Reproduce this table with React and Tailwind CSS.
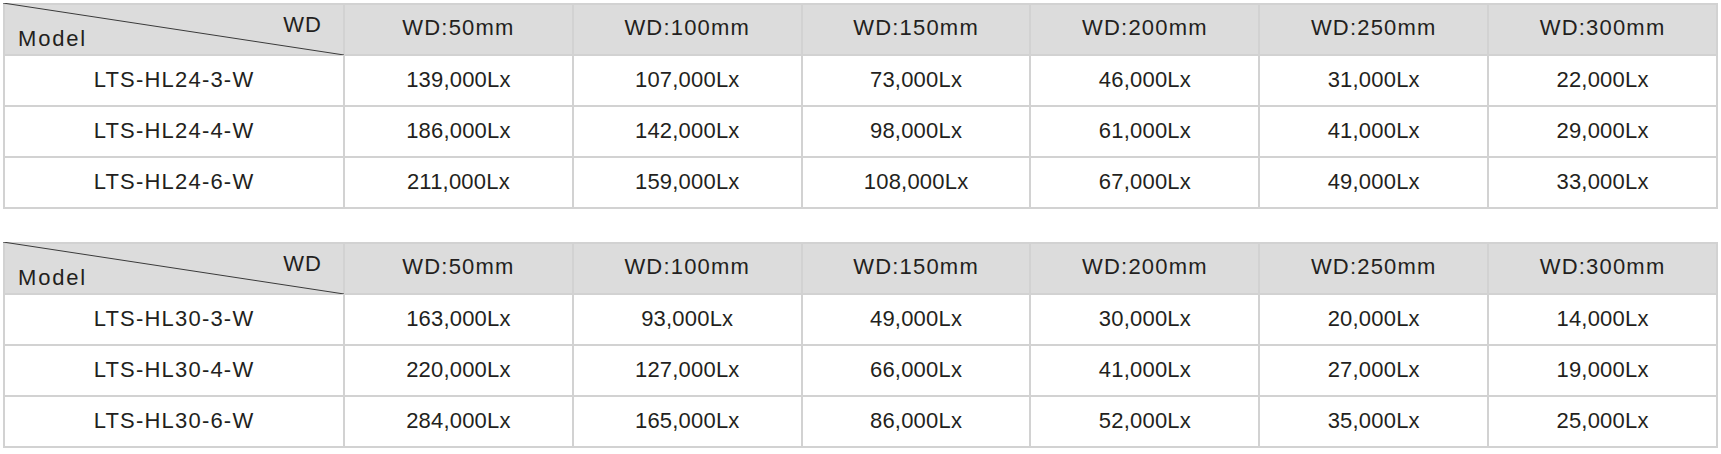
const columns = ['WD:50mm', 'WD:100mm', 'WD:150mm', 'WD:200mm', 'WD:250mm', 'WD:300mm'];

const tables = [
  [
    ['LTS-HL24-3-W', '139,000Lx', '107,000Lx', '73,000Lx', '46,000Lx', '31,000Lx', '22,000Lx'],
    ['LTS-HL24-4-W', '186,000Lx', '142,000Lx', '98,000Lx', '61,000Lx', '41,000Lx', '29,000Lx'],
    ['LTS-HL24-6-W', '211,000Lx', '159,000Lx', '108,000Lx', '67,000Lx', '49,000Lx', '33,000Lx'],
  ],
  [
    ['LTS-HL30-3-W', '163,000Lx', '93,000Lx', '49,000Lx', '30,000Lx', '20,000Lx', '14,000Lx'],
    ['LTS-HL30-4-W', '220,000Lx', '127,000Lx', '66,000Lx', '41,000Lx', '27,000Lx', '19,000Lx'],
    ['LTS-HL30-6-W', '284,000Lx', '165,000Lx', '86,000Lx', '52,000Lx', '35,000Lx', '25,000Lx'],
  ],
];

const LuxTable = ({ rows }) => (
  <div className="grid grid-cols-[338px_repeat(6,1fr)] auto-rows-[49px] gap-[2px] border-2 border-[#d2d2d2] bg-[#d2d2d2]">
    {/* Corner cell with diagonal */}
    <div className="relative bg-[#dcdcdc]">
      <svg className="absolute -left-[2px] -top-[2px] h-[calc(100%+3px)] w-[calc(100%+3px)]" viewBox="0 0 100 100" preserveAspectRatio="none">
        <line x1="0" y1="0" x2="100" y2="100" stroke="#3a3a3a" strokeWidth="1" vectorEffect="non-scaling-stroke" />
      </svg>
      <span className="absolute left-[13px] top-[21px] text-[22px] leading-[25px] tracking-[1.8px]">Model</span>
      <span className="absolute right-[21px] top-[7px] text-[22px] leading-[25px] tracking-[1px]">WD</span>
    </div>
    {columns.map((c) => (
      <div key={c} className="flex items-center justify-center bg-[#dcdcdc] pb-[4px] text-[22px] tracking-[1.2px]">
        {c}
      </div>
    ))}

    {rows.map((row) =>
      row.map((cell, i) => (
        <div
          key={row[0] + i}
          className={`flex items-center justify-center bg-white pb-[2px] text-[22px] ${
            i === 0 ? 'tracking-[1.2px]' : 'tracking-[0.2px]'
          }`}
        >
          {cell}
        </div>
      ))
    )}
  </div>
);

export default function App() {
  return (
    <div className="w-[1721px] h-[454px] bg-white pl-[3px] pt-[3px] pr-[3px] text-[#231f20] font-['Liberation_Sans',Arial,sans-serif]">
      <div className="flex flex-col gap-[33px]">
        {tables.map((rows, idx) => (
          <LuxTable key={idx} rows={rows} />
        ))}
      </div>
    </div>
  );
}
